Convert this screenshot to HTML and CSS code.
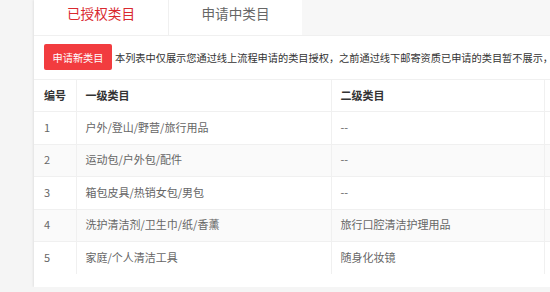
FILE: index.html
```html
<!DOCTYPE html>
<html lang="zh-CN">
<head>
  <meta charset="UTF-8">
  <meta name="viewport" content="width=device-width, initial-scale=1.0">
  <link rel="stylesheet" href="styles.css">
</head>
<body>
  <div class="page">
    <!-- 标签页 -->
    <div class="tabs">
      <div class="tab tab-active">已授权类目</div>
      <div class="tab">申请中类目</div>
    </div>
    <div class="card">
      <div class="toolbar">
        <button class="apply-button" type="button">申请新类目</button>
        <span class="notice">本列表中仅展示您通过线上流程申请的类目授权，之前通过线下邮寄资质已申请的类目暂不展示，但</span>
      </div>
      <!-- 类目列表 -->
      <table class="category-table">
        <thead>
          <tr>
            <th class="col-no">编号</th>
            <th class="col-first">一级类目</th>
            <th class="col-second">二级类目</th>
            <th class="col-more"></th>
          </tr>
        </thead>
        <tbody>
          <tr>
            <td>1</td>
            <td>户外/登山/野营/旅行用品</td>
            <td class="empty">--</td>
            <td></td>
          </tr>
          <tr>
            <td>2</td>
            <td>运动包/户外包/配件</td>
            <td class="empty">--</td>
            <td></td>
          </tr>
          <tr>
            <td>3</td>
            <td>箱包皮具/热销女包/男包</td>
            <td class="empty">--</td>
            <td></td>
          </tr>
          <tr>
            <td>4</td>
            <td>洗护清洁剂/卫生巾/纸/香薰</td>
            <td>旅行口腔清洁护理用品</td>
            <td></td>
          </tr>
          <tr>
            <td>5</td>
            <td>家庭/个人清洁工具</td>
            <td>随身化妆镜</td>
            <td></td>
          </tr>
        </tbody>
      </table>
    </div>
  </div>
</body>
</html>
```

FILE: styles.css
```css
body, html {
  margin: 0;
  padding: 0;
  overflow: hidden;
}

body {
  background-color: #f5f5f5;
  font-family: "Noto Sans CJK SC", "Microsoft YaHei", sans-serif;
  color: #333;
}

.page {
  margin-left: 34px;
  width: 640px;
  height: 287px;
  display: flex;
  flex-direction: column;
  box-shadow: -1px 0 2px rgba(0, 0, 0, 0.08);
}

.tabs {
  display: flex;
  height: 35px;
  background-color: #f7f7f7;
}

.tab {
  width: 134px;
  height: 35px;
  display: flex;
  justify-content: center;
  align-items: center;
  background-color: #fff;
  border-left: 1px solid #f0f0f0;
  box-sizing: border-box;
  font-size: 13.6px;
  color: #666;
  padding-bottom: 9px;
}

.tab-active {
  color: #d9292f;
  border-left: none;
}

.card {
  flex: 1;
  background-color: #fff;
  border-top: 1px solid #f0f0f0;
  padding-top: 8px;
}

.toolbar {
  display: flex;
  align-items: center;
  gap: 3px;
  padding-left: 10px;
  white-space: nowrap;
}

.apply-button {
  height: 26px;
  width: 68px;
  padding: 0;
  border: none;
  border-radius: 2px;
  background-color: #f23c3f;
  color: #fff;
  font-family: inherit;
  font-size: 10.2px;
  cursor: pointer;
}

.notice {
  font-size: 10.2px;
  color: #333;
}

.category-table {
  margin-top: 9px;
  border-collapse: collapse;
  width: 640px;
  font-size: 11px;
}

.category-table th,
.category-table td {
  height: 32.4px;
  padding: 0 9px 2px;
  text-align: left;
  box-sizing: border-box;
  border-top: 1px solid #f0f0f0;
  border-left: 1px solid #f0f0f0;
}

.category-table th:first-child,
.category-table td:first-child {
  border-left: none;
  padding-left: 10px;
}

.category-table th {
  font-weight: bold;
  color: #333;
}

.category-table td {
  color: #666;
}

.category-table tbody tr:nth-child(even) td {
  background-color: #fafafa;
}

.col-no {
  width: 42px;
}

.col-first {
  width: 255px;
}

.col-second {
  width: 213px;
}

.empty {
  color: #999;
}
```
